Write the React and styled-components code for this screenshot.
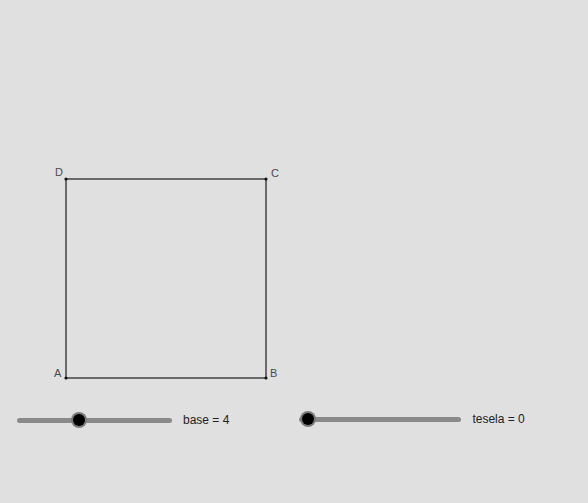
import React from 'react';
import styled, { createGlobalStyle } from 'styled-components';

const GlobalStyle = createGlobalStyle`
  html, body {
    margin: 0;
    padding: 0;
    background: #e0e0e0;
  }
  body {
    font-family: "Liberation Sans", Arial, sans-serif;
  }
`;

const points = [
  { name: 'A', x: 66, y: 378, lx: 54, ly: 377 },
  { name: 'B', x: 266, y: 378, lx: 270, ly: 377 },
  { name: 'C', x: 266, y: 179, lx: 271, ly: 177 },
  { name: 'D', x: 66, y: 179, lx: 55, ly: 176 },
];

const sliders = [
  { id: 'base', label: 'base = 4', offset: 17, width: 155, value: 0.4, top: 0 },
  { id: 'tesela', label: 'tesela = 0', offset: 70, width: 162, value: 0.055, top: -1 },
];

const App = () => {
  const poly = points.map((p) => `${p.x},${p.y}`).join(' ');
  return (
    <>
      <GlobalStyle />
      <Page>
        <Canvas width="588" height="408" viewBox="0 0 588 408">
          <polygon points={poly} fill="none" stroke="#6a6a6a" strokeWidth="2" />
          {points.map((p) => (
            <g key={p.name}>
              <circle cx={p.x} cy={p.y} r="1.6" fill="#111" />
              <text x={p.lx} y={p.ly} fontSize="11" fill="#4a4a4a" fontFamily="Liberation Sans, Arial, sans-serif">
                {p.name}
              </text>
            </g>
          ))}
        </Canvas>
        <SliderRow>
          {sliders.map((s) => (
            <SliderGroup key={s.id} $offset={s.offset} $top={s.top}>
              <Track $width={s.width}>
                <Knob style={{ left: `${s.value * 100}%` }} />
              </Track>
              <SliderLabel>{s.label}</SliderLabel>
            </SliderGroup>
          ))}
        </SliderRow>
      </Page>
    </>
  );
};

export default App;

const Page = styled.div`
  width: 588px;
  height: 503px;
  background: #e0e0e0;
  overflow: hidden;
`;

const Canvas = styled.svg`
  display: block;
`;

const SliderRow = styled.div`
  display: flex;
  align-items: center;
  height: 24px;
`;

const SliderGroup = styled.div`
  display: flex;
  align-items: center;
  gap: 11px;
  margin-left: ${(p) => p.$offset}px;
  position: relative;
  top: ${(p) => p.$top}px;
`;

const Track = styled.div`
  position: relative;
  width: ${(p) => p.$width}px;
  height: 5px;
  border-radius: 3px;
  background: #8a8a8a;
`;

const Knob = styled.div`
  position: absolute;
  top: 50%;
  width: 12px;
  height: 12px;
  border-radius: 50%;
  background: #000;
  box-shadow: 0 0 0 2px #7a7a7a;
  transform: translate(-50%, -50%);
`;

const SliderLabel = styled.span`
  font-size: 12px;
  color: #222;
  white-space: nowrap;
`;
